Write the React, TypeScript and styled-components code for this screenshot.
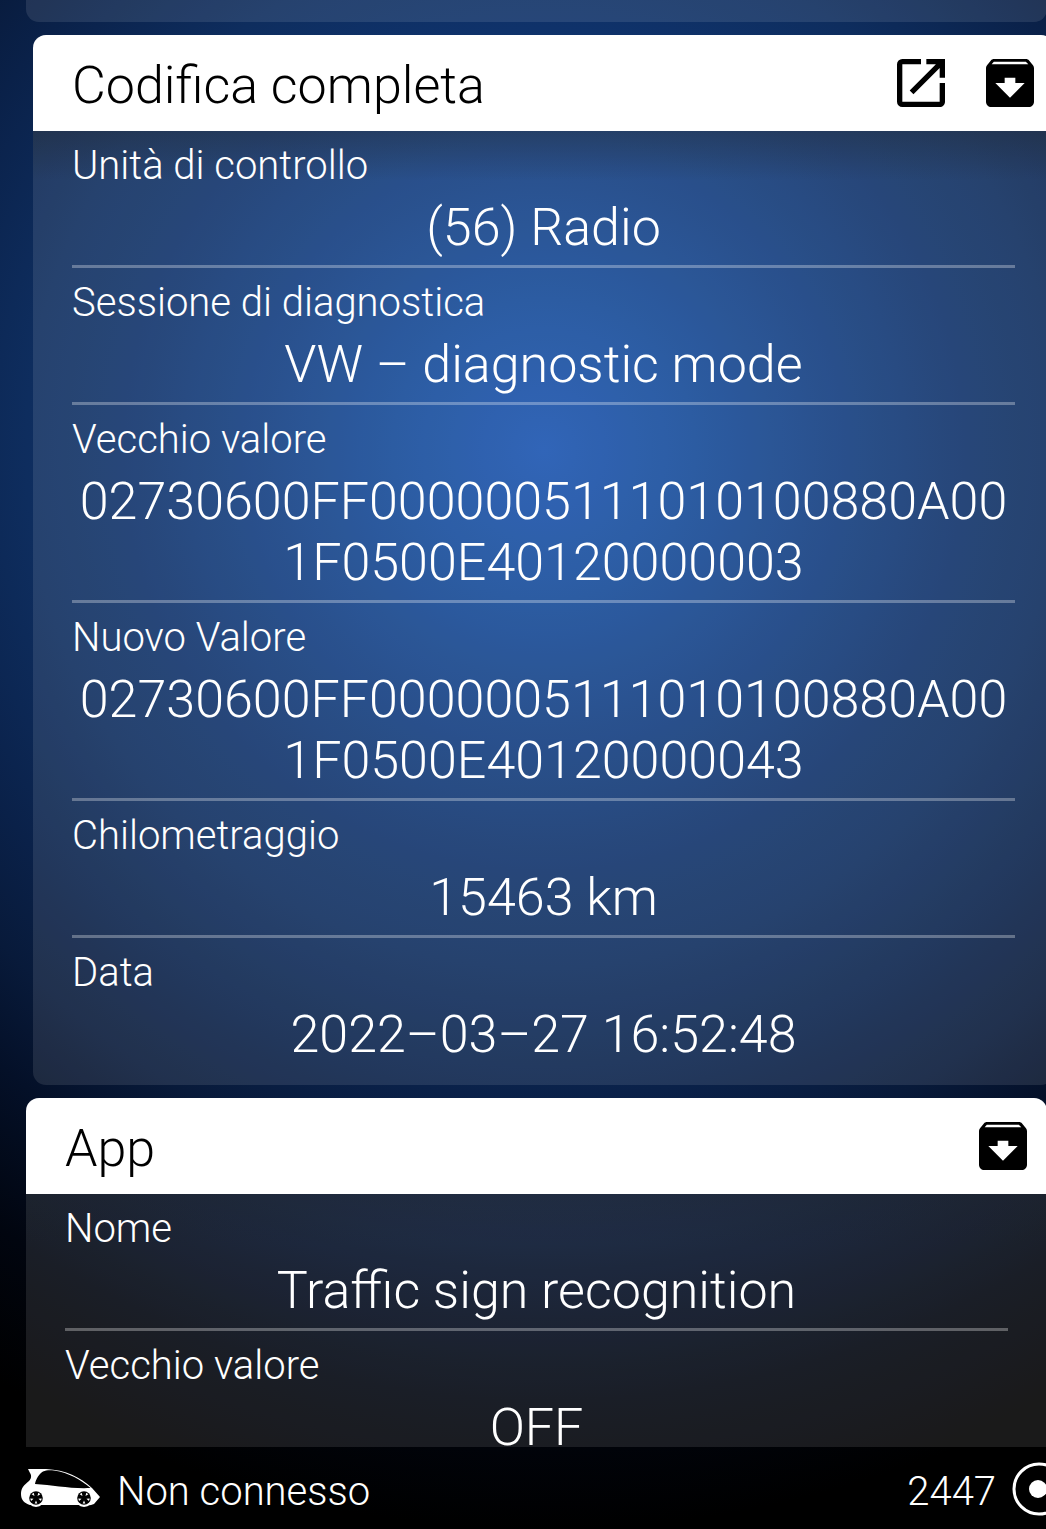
import React from "react";
import styled, { createGlobalStyle } from "styled-components";

const GlobalStyle = createGlobalStyle`
  *, *::before, *::after { box-sizing: border-box; }
  body {
    margin: 0;
    background: #000;
    color: #fff;
    font-family: Roboto, "Liberation Sans", sans-serif;
    font-weight: 300;
  }
`;

const Screen = styled.div`
  display: flex;
  flex-direction: column;
  height: 100vh;
  overflow: hidden;
  background: radial-gradient(
    circle 1080px at 52% 450px,
    #1a54b0 0%,
    #154a98 14%,
    #113c7e 28%,
    #0f326a 39%,
    #0e2d5e 48%,
    #0a2149 60%,
    #081a3a 68%,
    #041028 76%,
    #01050f 88%,
    #000 100%
  );
`;

const Log = styled.main`
  display: flex;
  flex: 1;
  min-height: 0;
  flex-direction: column;
  gap: 13px;
  overflow: hidden;
`;

const Card = styled.section<{ $nested?: boolean; $continued?: boolean }>`
  flex: none;
  margin-left: ${(p) => (p.$nested ? 33 : 26)}px;
  margin-right: ${(p) => (p.$nested ? -8 : -1)}px;
  border-radius: ${(p) => (p.$continued ? "0 0 13px 13px" : "13px")};
  overflow: hidden;
  background: rgba(255, 255, 255, 0.1);
`;

const CardEnd = styled.div`
  height: 22px;
`;

const CardHeader = styled.header`
  display: flex;
  align-items: center;
  gap: 25px;
  height: 96px;
  padding: 0 12px 0 39px;
  background: #fff;
  color: #000;
`;

const Title = styled.h2`
  flex: 1;
  margin: 0;
  padding-top: 4px;
  font-size: 52px;
  font-weight: 300;
  line-height: 61px;
`;

const IconButton = styled.button`
  display: block;
  width: 64px;
  height: 64px;
  padding: 0;
  border: 0;
  background: none;
  color: inherit;
  cursor: pointer;

  svg {
    display: block;
    width: 64px;
    height: 64px;
    fill: currentColor;
  }
`;

const Fields = styled.dl`
  margin: 0;
  padding: 0 39px 13px;
  background: linear-gradient(rgba(30, 36, 44, 0.35), rgba(30, 36, 44, 0) 50px);
`;

const Field = styled.div`
  padding: 11px 0 7px;
  border-bottom: 3px solid rgba(255, 255, 255, 0.3);

  &:last-child {
    border-bottom: 0;
  }
`;

const Label = styled.dt`
  font-size: 40px;
  line-height: 48px;
`;

const Value = styled.dd`
  margin: 7px 0 0;
  font-size: 52px;
  line-height: 61px;
  text-align: center;
  word-break: break-word;
`;

const StatusBar = styled.footer`
  display: flex;
  flex: none;
  align-items: center;
  height: 82px;
  padding: 2px 0 0 20px;
  overflow: hidden;
  font-size: 40px;
  line-height: 48px;
`;

const CarIcon = styled.svg`
  width: 82px;
  height: 40px;
  margin-right: 15px;
`;

const StatusText = styled.span<{ $grow?: boolean }>`
  flex: ${(p) => (p.$grow ? 1 : "none")};
  padding-top: 6px;
`;

const CoinIcon = styled.svg`
  flex: none;
  width: 54px;
  height: 54px;
  margin-left: 16px;
  margin-right: -20px;
`;

type Entry = { label: string; value: string };

const coding: Entry[] = [
  { label: "Unità di controllo", value: "(56) Radio" },
  { label: "Sessione di diagnostica", value: "VW – diagnostic mode" },
  { label: "Vecchio valore", value: "02730600FF0000005111010100880A001F0500E40120000003" },
  { label: "Nuovo Valore", value: "02730600FF0000005111010100880A001F0500E40120000043" },
  { label: "Chilometraggio", value: "15463 km" },
  { label: "Data", value: "2022–03–27 16:52:48" },
];

const app: Entry[] = [
  { label: "Nome", value: "Traffic sign recognition" },
  { label: "Vecchio valore", value: "OFF" },
];

const OpenButton = () => (
  <IconButton type="button" aria-label="Apri">
    <svg viewBox="0 0 24 24" aria-hidden="true">
      <path d="M19 19H5V5h7V3H5a2 2 0 0 0-2 2v14a2 2 0 0 0 2 2h14c1.1 0 2-.9 2-2v-7h-2v7zM14 3v2h3.59l-9.83 9.83 1.41 1.41L19 6.41V10h2V3h-7z" />
    </svg>
  </IconButton>
);

const ArchiveButton = () => (
  <IconButton type="button" aria-label="Archivia">
    <svg viewBox="0 0 24 24" aria-hidden="true">
      <path d="M20.54 5.23l-1.39-1.68C18.88 3.21 18.47 3 18 3H6c-.47 0-.88.21-1.16.55L3.46 5.23C3.17 5.57 3 6.02 3 6.5V19c0 1.1.9 2 2 2h14c1.1 0 2-.9 2-2V6.5c0-.48-.17-.93-.46-1.27zM12 17.5L6.5 12H10v-2h4v2h3.5L12 17.5zM5.12 5l.81-1h12l.94 1H5.12z" />
    </svg>
  </IconButton>
);

const FieldList = ({ entries }: { entries: Entry[] }) => (
  <Fields>
    {entries.map((e) => (
      <Field key={e.label}>
        <Label>{e.label}</Label>
        <Value>{e.value}</Value>
      </Field>
    ))}
  </Fields>
);

const Wheel = ({ cx, cy }: { cx: number; cy: number }) => (
  <g transform={`translate(${cx} ${cy})`}>
    <circle r="9" fill="#fff" />
    <circle r="6.8" fill="#000" />
    {[0, 72, 144, 216, 288].map((a) => (
      <path key={a} d="M-1.3-5.6L1.3-5.6L0-2.6z" fill="#fff" transform={`rotate(${a + 36})`} />
    ))}
  </g>
);

export default function App() {
  return (
    <>
      <GlobalStyle />
      <Screen>
        <Log>
          <Card $continued>
            <CardEnd />
          </Card>
          <Card $nested>
            <CardHeader>
              <Title>Codifica completa</Title>
              <OpenButton />
              <ArchiveButton />
            </CardHeader>
            <FieldList entries={coding} />
          </Card>
          <Card>
            <CardHeader>
              <Title>App</Title>
              <ArchiveButton />
            </CardHeader>
            <FieldList entries={app} />
          </Card>
        </Log>
        <StatusBar>
          <CarIcon viewBox="0 0 82 40" aria-hidden="true">
            <path
              fill="#fff"
              d="M8 0L26 0C46 1 60 8 72 19L80 28L74 35C70 37 66 36 62 36L10 36C4 34 1 31 1 25C1 19 4 16 9 12C11 10 12 7 10 4Z"
            />
            <path
              fill="#000"
              d="M15 15C16 10 19 5 23 2.600C26 1.200 30 1 34 1.600C49 4 61 11 70.500 19C51 20 33 16 15 15Z"
            />
            <Wheel cx={16} cy={29} />
            <Wheel cx={64} cy={29} />
          </CarIcon>
          <StatusText $grow>Non connesso</StatusText>
          <StatusText>2447</StatusText>
          <CoinIcon viewBox="0 0 54 54" aria-hidden="true">
            <circle cx="27" cy="27" r="25" fill="none" stroke="#fff" strokeWidth="3" />
            <circle cx="26" cy="27" r="9" fill="#fff" />
            <circle cx="39" cy="27" r="7" fill="#fff" />
          </CoinIcon>
        </StatusBar>
      </Screen>
    </>
  );
}
